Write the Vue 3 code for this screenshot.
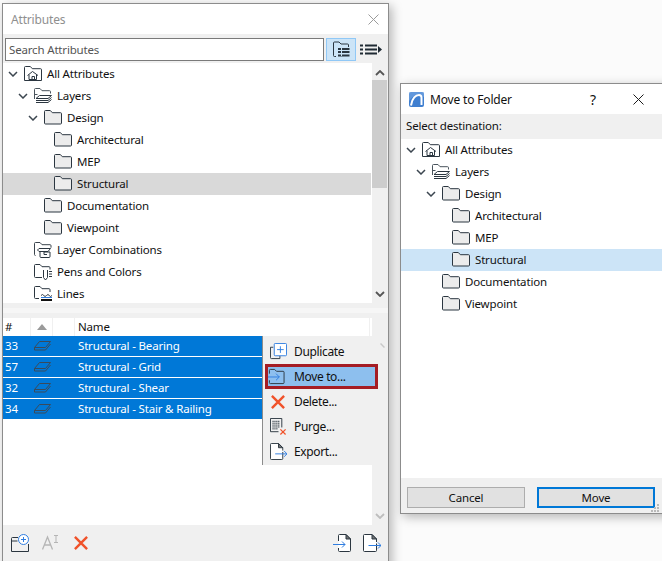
<script setup>
const leftTree = [
  { label: 'All Attributes', level: 0, open: true, icon: 'i-home' },
  { label: 'Layers', level: 1, open: true, icon: 'i-layers' },
  { label: 'Design', level: 2, open: true, icon: 'i-folder' },
  { label: 'Architectural', level: 3, icon: 'i-folder' },
  { label: 'MEP', level: 3, icon: 'i-folder' },
  { label: 'Structural', level: 3, icon: 'i-folder', selected: true },
  { label: 'Documentation', level: 2, icon: 'i-folder' },
  { label: 'Viewpoint', level: 2, icon: 'i-folder' },
  { label: 'Layer Combinations', level: 1, icon: 'i-combo' },
  { label: 'Pens and Colors', level: 1, icon: 'i-pens' },
  { label: 'Lines', level: 1, icon: 'i-lines' }
]
const rightTree = leftTree.slice(0, 8)
const layers = [
  { id: 33, name: 'Structural - Bearing' },
  { id: 57, name: 'Structural - Grid' },
  { id: 32, name: 'Structural - Shear' },
  { id: 34, name: 'Structural - Stair & Railing' }
]
const menu = [
  { label: 'Duplicate', icon: 'm-dup' },
  { label: 'Move to...', icon: 'm-move', active: true },
  { label: 'Delete...', icon: 'm-del' },
  { label: 'Purge...', icon: 'm-purge' },
  { label: 'Export...', icon: 'm-export' }
]
const indent = (level) => ({ paddingLeft: 5 + level * 10 + 'px' })
</script>

<template>
  <div class="desktop">
    <svg class="defs" width="0" height="0" aria-hidden="true">
      <defs>
        <symbol id="i-folder" viewBox="0 0 18 16">
          <path d="M.5 13V1.500q0-1 1-1H6.300l2 2.200h8.200q1 0 1 1V13q0 1-1 1h-15q-1 0-1-1z" fill="#ececec" stroke="#2b3640" />
        </symbol>
        <symbol id="i-home" viewBox="0 0 18 16">
          <path d="M.5 14.500V1.500q0-1 1-1H6.300l2 2.200h8.200q1 0 1 1v10.800z" fill="#fff" stroke="#2b3640" />
          <path d="M3.500 9.500 8.500 5.500l5.500 4M5 8.700v4.800h7.500V8.700M8 13.500v-3h2.500v3" fill="none" stroke="#2b3640" />
        </symbol>
        <symbol id="i-layers" viewBox="0 0 18 16">
          <path d="M.5 11V1.500q0-1 1-1H6l2 2.200h7.500q1 0 1 1V5.500" fill="none" stroke="#4a545d" />
          <path d="M3.500 6.500H.5" fill="none" stroke="#4a545d" />
          <path d="M5.500 7.500H17.500L14 10.500H2z" fill="#fff" stroke="#2b3640" />
          <path d="M2 12.500H14L17.500 9.500M2 14.500H14L17.500 11.500" fill="none" stroke="#2b3640" />
        </symbol>
        <symbol id="i-combo" viewBox="0 0 18 16">
          <path d="M1.500 13.500q-1 0-1-1V1.500q0-1 1-1H6l2 2.200h8q1 0 1 1v2" fill="none" stroke="#3a444d" />
          <path d="M5 6.500H16.500L14 9.500H5L3.500 8zM6 10v4.500q0 1 1 1h8q1 0 1-1V10H10v2.500h3" fill="none" stroke="#2b3640" />
        </symbol>
        <symbol id="i-pens" viewBox="0 0 18 16">
          <path d="M8 13.500H1.500q-1 0-1-1V1.500q0-1 1-1H6l2 2.200h7q1 0 1 1V5.500" fill="none" stroke="#2b3640" />
          <path d="M9.500 6v7.500l2 2.500 2-2.500V6" fill="none" stroke="#2b3640" />
          <path d="M15 7.500h3M15 10h3M15 12.500h3" stroke="#2b3640" />
        </symbol>
        <symbol id="i-lines" viewBox="0 0 18 16">
          <path d="M5 12.500H1.500q-1 0-1-1V1.500q0-1 1-1H6l2 2.200h7q1 0 1 1V6" fill="none" stroke="#2b3640" />
          <path d="M7 9.500q1.500-2 2.750 0t2.750 0 2.750 0 2.750 0" fill="none" stroke="#2b3640" />
          <path d="M7 11.500h11" stroke="#2f7de0" />
          <path d="M7 14h11" stroke="#111" stroke-width="2" />
        </symbol>
        <symbol id="m-dup" viewBox="0 0 18 18">
          <path d="M3.500 4.500H.5V15.500q0 1 1 1H10.500v-3" fill="none" stroke="#2b3640" />
          <rect x="4.500" y=".5" width="13" height="13" rx="1" fill="#fff" stroke="#2f7de0" />
          <path d="M11 3.500v7M7.500 7h7" stroke="#2f7de0" />
        </symbol>
        <symbol id="m-move" viewBox="0 0 18 18">
          <path d="M1.500 6V2.500q0-1 1-1H7l2 2h7q1 0 1 1v11q0 1-1 1H2.500q-1 0-1-1V13" fill="none" stroke="#2b3640" />
          <path d="M0 9.500H12M8.500 6l3.500 3.500L8.500 13" fill="none" stroke="#2f7de0" />
        </symbol>
        <symbol id="m-del" viewBox="0 0 14 14">
          <path d="M.9 .9 13.100 13.100M13.100 .9 .9 13.100" stroke="#f0522a" stroke-width="2.400" fill="none" />
        </symbol>
        <symbol id="m-purge" viewBox="0 0 18 18">
          <path d="M12.500 10V.5H.5v14H9" fill="none" stroke="#2b3640" />
          <path d="M2.500 3.500h8M2.500 5.500h8M2.500 7.500h8M2.500 9.500h8M2.500 11.500h6" stroke="#2b3640" stroke-dasharray="1.500 .5" />
          <path d="M11 12l5.500 5.500M16.500 12 11 17.500" stroke="#f0522a" stroke-width="1.300" />
        </symbol>
        <symbol id="m-export" viewBox="0 0 18 18">
          <path d="M13.500 9.500V16.500q0 1-1 1H1.500q-1 0-1-1V1.500q0-1 1-1H9l4.500 4.500V8" fill="#fff" stroke="#2b3640" />
          <path d="M9 .5v4.500h4.500z" fill="#777" stroke="#2b3640" />
          <path d="M5.500 11.500H18M15 8.500l3 3-3 3" fill="none" stroke="#2f7de0" />
        </symbol>
        <symbol id="m-import" viewBox="0 0 18 18">
          <path d="M5.500 7V1.500q0-1 1-1H13l4.500 4.500V16.500q0 1-1 1H6.500q-1 0-1-1V14" fill="#fff" stroke="#2b3640" />
          <path d="M13 .5v4.500h4.500z" fill="#777" stroke="#2b3640" />
          <path d="M0 10.500H12M9 7.500l3 3-3 3" fill="none" stroke="#2f7de0" />
        </symbol>
      </defs>
    </svg>

    <section class="win win-left">
      <header class="title">
        <span class="title-muted">Attributes</span>
        <svg class="close" width="11" height="11" viewBox="0 0 11 11"><path d="M.5.500l10 10M10.500.500l-10 10" stroke="#9b9b9b" fill="none" /></svg>
      </header>
      <div class="toolbar">
        <div class="search">Search Attributes</div>
        <button class="tool-btn" type="button">
          <svg width="17" height="17" viewBox="0 0 17 17">
            <path d="M.5 14.500V2q0-1 1-1H6l2 2h6.500q1 0 1 1v2M3 15.500h-1.500q-1 0-1-1" fill="none" stroke="#2b3640" />
            <path d="M5 8h11.500M5 11h11.500M5 14.500h11.500" stroke="#2b3640" stroke-width="1.800" />
            <path d="M8.500 7v8" stroke="#cce4f7" />
          </svg>
        </button>
        <svg class="list-btn" width="22" height="11" viewBox="0 0 22 11">
          <path d="M0 1.500h3M5 1.500h12M0 5.500h3M5 5.500h12M0 9.500h3M5 9.500h12" stroke="#1f2a33" stroke-width="2" />
          <path d="M18 2l4 3.500L18 9z" fill="#1f2a33" />
        </svg>
      </div>

      <div class="pane tree-pane">
        <div class="tree">
          <div v-for="row in leftTree" :key="row.label" class="row" :class="{ 'row-gray': row.selected }" :style="indent(row.level)">
            <span class="chev">
              <svg v-if="row.open" width="10" height="6" viewBox="0 0 10 6"><path d="M1 1l4 4 4-4" fill="none" stroke="#3c4650" stroke-width="1.500" /></svg>
            </span>
            <svg class="node-icon" width="18" height="16"><use :href="'#' + row.icon" /></svg>
            <span class="label">{{ row.label }}</span>
          </div>
        </div>
        <div class="scroll">
          <svg class="arrow arrow-up" width="10" height="6" viewBox="0 0 10 6"><path d="M1 5l4-4 4 4" fill="none" stroke="#555" stroke-width="1.800" /></svg>
          <div class="thumb"></div>
          <svg class="arrow arrow-down" width="10" height="6" viewBox="0 0 10 6"><path d="M1 1l4 4 4-4" fill="none" stroke="#555" stroke-width="1.800" /></svg>
        </div>
      </div>

      <div class="splitter"></div>

      <div class="pane list-pane">
        <div class="list">
          <div class="list-head">
            <span class="cell cell-num">#</span>
            <span class="cell cell-ico"><i class="sort"></i></span>
            <span class="cell cell-flag"></span>
            <span class="cell cell-name">Name</span>
          </div>
          <div v-for="l in layers" :key="l.id" class="list-row">
            <span class="cell-num">{{ l.id }}</span>
            <span class="cell-ico">
              <svg width="17" height="10" viewBox="0 0 17 10"><path d="M5.500.500H16.500L11.500 6.500H.5zM.5 6.500V9H11.500L16.500 3" fill="none" stroke="#3a4a5a" /></svg>
            </span>
            <span class="cell-flag"></span>
            <span class="list-name">{{ l.name }}</span>
          </div>
        </div>
        <div class="scroll scroll-plain">
          <svg class="tick" width="5" height="5" viewBox="0 0 5 5"><path d="M.5.500l4 4" stroke="#c9c9c9" stroke-width="1.500" fill="none" /></svg>
          <svg class="arrow arrow-down" width="10" height="6" viewBox="0 0 10 6"><path d="M1 1l4 4 4-4" fill="none" stroke="#bdbdbd" stroke-width="1.800" /></svg>
        </div>
        <div class="menu">
          <div v-for="m in menu" :key="m.label" class="menu-item" :class="{ 'menu-active': m.active }">
            <svg class="menu-icon" :class="m.icon" width="17" height="17"><use :href="'#' + m.icon" /></svg>
            <span>{{ m.label }}</span>
          </div>
        </div>
      </div>

      <footer class="foot-left">
        <svg width="18" height="18" viewBox="0 0 18 18">
          <path d="M7 3.500H1.500q-1 0-1 1V17.500h17V10" fill="none" stroke="#2b3640" />
          <path d="M.5 7h6" stroke="#2b3640" />
          <circle cx="12.500" cy="5.500" r="5" fill="#fff" stroke="#2f7de0" />
          <path d="M12.500 3v5M10 5.500h5" stroke="#2f7de0" />
        </svg>
        <svg class="gap-a" width="18" height="15" viewBox="0 0 18 15">
          <path d="M.5 14.500 5.500 2l5 12.500M2.500 10h6" fill="none" stroke="#b5b5b5" stroke-width="1.300" />
          <path d="M12 .5h4M12 7.500h4M14 .5v7" fill="none" stroke="#b5b5b5" />
        </svg>
        <svg class="gap-x" width="14" height="14"><use href="#m-del" /></svg>
        <span class="spacer"></span>
        <svg width="18" height="18"><use href="#m-import" /></svg>
        <svg class="gap-e" width="18" height="18"><use href="#m-export" /></svg>
      </footer>
    </section>

    <section class="win win-right">
      <header class="title title-right">
        <svg class="logo" width="15" height="15" viewBox="0 0 15 15">
          <rect width="15" height="15" rx="2" fill="#3f7fd0" />
          <path d="M0 0h15v5C9 1 4 3 0 9z" fill="#8fb8ea" opacity=".45" />
          <path d="M2 13.500C3 6 7 3 10 3c1.500 0 2.500 1 2.500 2.500V13" fill="none" stroke="#fff" stroke-width="2" />
        </svg>
        <span class="title-text">Move to Folder</span>
        <span class="help">?</span>
        <svg width="11" height="11" viewBox="0 0 11 11"><path d="M.5.500l10 10M10.500.500l-10 10" stroke="#1c1c1c" fill="none" /></svg>
      </header>
      <div class="dest">Select destination:</div>
      <div class="tree tree-right">
        <div v-for="row in rightTree" :key="row.label" class="row" :class="{ 'row-blue': row.selected }" :style="indent(row.level)">
          <span class="chev">
            <svg v-if="row.open" width="10" height="6" viewBox="0 0 10 6"><path d="M1 1l4 4 4-4" fill="none" stroke="#3c4650" stroke-width="1.500" /></svg>
          </span>
          <svg class="node-icon" width="18" height="16"><use :href="'#' + row.icon" /></svg>
          <span class="label">{{ row.label }}</span>
        </div>
      </div>
      <footer class="foot-right">
        <button class="btn" type="button">Cancel</button>
        <button class="btn btn-primary" type="button">Move</button>
        <svg class="grip" width="8" height="8" viewBox="0 0 8 8"><path d="M6 0h2v2H6zM3 3h2v2H3zM6 3h2v2H6zM0 6h2v2H0zM3 6h2v2H3zM6 6h2v2H6z" fill="#b9b9b9" /></svg>
      </footer>
    </section>
  </div>
</template>

<style>
html, body { margin: 0; background: #fbfbfb; }
</style>

<style scoped>
.desktop {
  position: relative;
  width: 662px;
  height: 561px;
  overflow: hidden;
  background: #fbfbfb;
  font-family: "Noto Sans", "Open Sans", sans-serif;
  font-size: 11.5px;
  letter-spacing: -.17px;
  color: #111;
}
.defs { position: absolute; }
.win {
  position: absolute;
  display: flex;
  flex-direction: column;
  box-sizing: border-box;
  background: #f0f0f0;
  border: 1px solid #8c8c8c;
  box-shadow: 3px 3px 10px rgba(0, 0, 0, .28);
}
.win-left { left: 2px; top: 3px; width: 387px; height: 600px; }
.win-right { left: 400px; top: 83px; width: 270px; height: 431px; }

.title {
  display: flex;
  align-items: center;
  justify-content: space-between;
  height: 30px;
  flex: none;
  padding: 0 10px 0 8px;
  background: #fff;
}
.title-muted { color: #8f8f8f; font-size: 12px; }
.close { margin-right: -1px; }
.toolbar {
  display: flex;
  align-items: flex-start;
  height: 29px;
  flex: none;
  box-sizing: border-box;
  padding: 4px 0 0 2px;
}
.search {
  box-sizing: border-box;
  width: 319px;
  height: 23px;
  padding-left: 3px;
  line-height: 21px;
  color: #555;
  background: #fff;
  border: 1px solid #7a7a7a;
}
.tool-btn {
  display: flex;
  align-items: center;
  justify-content: center;
  box-sizing: border-box;
  width: 30px;
  height: 23px;
  margin-left: 2px;
  padding: 0;
  background: #cce4f7;
  border: 1px solid #90c8f6;
}
.list-btn { margin: 6px 0 0 4px; }

.pane { display: flex; position: relative; flex: none; }
.tree-pane { height: 240px; overflow: hidden; }
.tree { flex: 1; background: #fff; min-width: 0; }
.row {
  display: flex;
  align-items: center;
  height: 22px;
  line-height: 22px;
  white-space: nowrap;
}
.row-gray { background: #d9d9d9; margin-right: 1px; }
.row-blue { background: #cce4f7; }
.chev { display: flex; align-items: center; width: 10px; margin-right: 6px; flex: none; }
.node-icon { flex: none; margin-right: 5px; }
.scroll {
  position: relative;
  width: 16px;
  flex: none;
  background: #f0f0f0;
}
.thumb { position: absolute; left: 0; top: 17px; width: 15px; height: 108px; background: #cdcdcd; }
.arrow { position: absolute; left: 3px; }
.arrow-up { top: 7px; }
.arrow-down { bottom: 6px; }
.tick { position: absolute; left: 8px; top: 25px; }
.splitter {
  height: 15px;
  flex: none;
  box-sizing: border-box;
  background: linear-gradient(#f0f0f0 5px, #f6f6f6 5px, #f6f6f6 10px, #f0f0f0 10px);
}

.list-pane { height: 207px; }
.list { flex: 1; background: #fff; min-width: 0; }
.list-head { display: flex; height: 18px; line-height: 18px; background: #f0f0f0; margin-right: 2px; }
.cell { background: #fff; border-right: 1px solid #f0f0f0; box-sizing: border-box; }
.cell-num { display: block; box-sizing: border-box; width: 28px; padding-left: 2px; flex: none; }
.cell-ico { display: flex; align-items: center; justify-content: center; width: 22px; flex: none; }
.cell-flag { display: block; width: 22px; flex: none; }
.cell-name { flex: 1; padding-left: 3px; }
.sort { width: 0; height: 0; border: 5px solid transparent; border-top: 0; border-bottom: 6px solid #9a9a9a; }
.list-row {
  display: flex;
  align-items: center;
  box-sizing: border-box;
  width: 259px;
  height: 20px;
  margin-bottom: 1px;
  padding-bottom: 2px;
  color: #fff;
  background: #0078d7;
}
.list-row .cell-ico { padding-top: 2px; }
.list-name { padding-left: 3px; white-space: nowrap; }
.scroll-plain { background: #f0f0f0; }

.menu {
  position: absolute;
  left: 259px;
  top: 18px;
  width: 110px;
  height: 129px;
  box-sizing: border-box;
  padding-top: 3px;
  background: #f0f0f0;
  border-left: 1px solid #8c8c8c;
}
.menu-item {
  display: flex;
  align-items: center;
  height: 25px;
  padding-left: 7px;
  font-size: 12px;
  letter-spacing: -.35px;
}
.menu-icon { flex: none; margin-right: 7px; }
.m-del { width: 14px; height: 14px; margin-left: 1px; margin-right: 9px; }
.menu-active {
  position: relative;
  width: 113px;
  box-sizing: border-box;
  padding-left: 0;
  margin-left: 2px;
  background: #8dbfee;
  border: 3px solid #a51d24;
}
.menu-active .menu-icon { margin-right: 9px; }
.foot-left {
  display: flex;
  align-items: center;
  height: 35px;
  padding: 0 7px 0 8px;
  box-sizing: border-box;
  flex: none;
}
.gap-a { margin-left: 13px; }
.gap-x { margin-left: 14px; }
.spacer { flex: 1; }
.gap-e { margin-left: 12px; }

.title-right { justify-content: flex-start; padding: 0 0 0 8px; flex: none; }
.logo { margin-right: 6px; }
.title-text { font-size: 12px; width: 160px; }
.help { font-size: 14px; width: 43px; }
.dest { height: 25px; line-height: 24px; padding-left: 5px; flex: none; }
.tree-right { flex: 1; }
.foot-right {
  position: relative;
  display: flex;
  gap: 12px;
  height: 35px;
  flex: none;
  box-sizing: border-box;
  padding: 9px 0 0 6px;
}
.btn {
  box-sizing: border-box;
  width: 118px;
  height: 21px;
  padding: 0;
  font: inherit;
  letter-spacing: inherit;
  color: #111;
  background: #e1e1e1;
  border: 1px solid #adadad;
  border-radius: 0;
}
.btn-primary { border: 2px solid #0078d7; }
.grip { position: absolute; left: 250px; top: 26px; }
</style>
